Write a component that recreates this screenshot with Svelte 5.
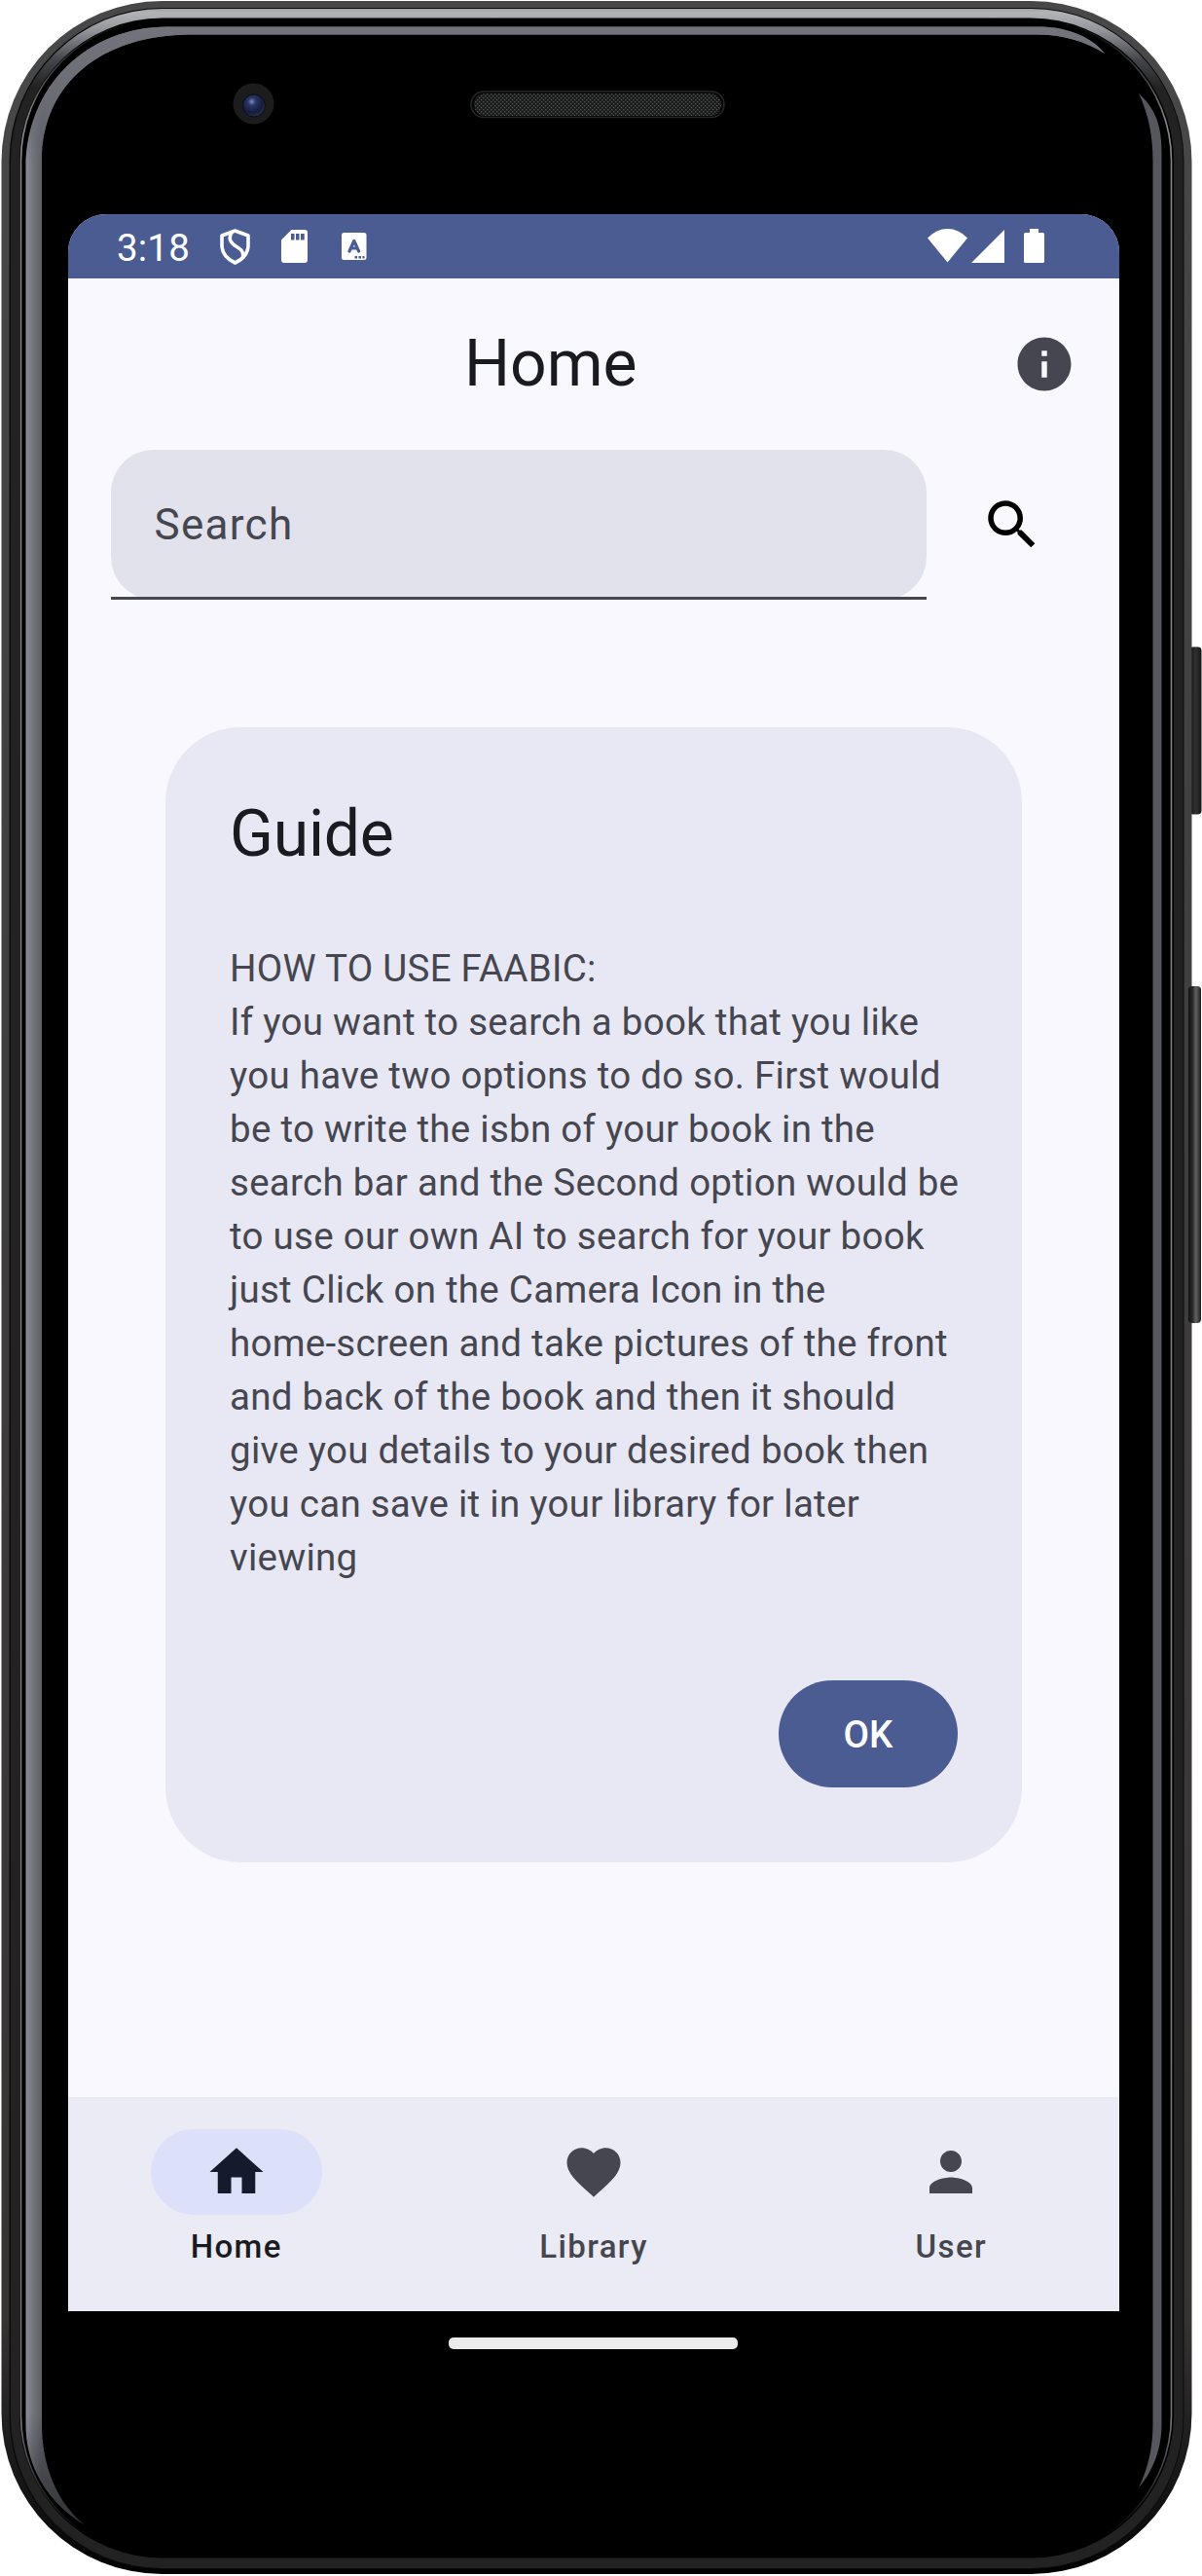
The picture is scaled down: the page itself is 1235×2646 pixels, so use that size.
<script>
  const tabs = [
    { label: 'Home', icon: 'M10 20v-6h4v6h5v-8h3L12 3 2 12h3v8z', active: true },
    {
      label: 'Library',
      icon: 'M12 21.35l-1.45-1.32C5.4 15.36 2 12.28 2 8.5 2 5.42 4.42 3 7.5 3c1.74 0 3.41.81 4.5 2.09C13.09 3.81 14.76 3 16.5 3 19.58 3 22 5.42 22 8.5c0 3.78-3.4 6.86-8.55 11.54z',
      active: false
    },
    {
      label: 'User',
      icon: 'M12 12c2.21 0 4-1.79 4-4s-1.79-4-4-4-4 1.79-4 4 1.79 4 4 4zm0 2c-2.67 0-8 1.34-8 4v2h16v-2c0-2.66-5.33-4-8-4z',
      active: false
    }
  ];

  const guide = [
    'HOW TO USE FAABIC:',
    'If you want to search a book that you like',
    'you have two options to do so. First would',
    'be to write the isbn of your book in the',
    'search bar and the Second option would be',
    'to use our own AI to search for your book',
    'just Click on the Camera Icon in the',
    'home-screen and take pictures of the front',
    'and back of the book and then it should',
    'give you details to your desired book then',
    'you can save it in your library for later',
    'viewing'
  ];
</script>

<div class="phone">
  <svg class="body" width="1235" height="2646" viewBox="0 0 1235 2646" aria-hidden="true">
    <defs>
      <linearGradient id="shell" gradientUnits="userSpaceOnUse" x1="0" y1="0" x2="0" y2="2646">
        <stop offset="0" stop-color="#484848" />
        <stop offset="0.9" stop-color="#363333" />
        <stop offset="0.975" stop-color="#111" />
        <stop offset="1" stop-color="#000" />
      </linearGradient>
      <linearGradient id="band" gradientUnits="userSpaceOnUse" x1="0" y1="8" x2="0" y2="90">
        <stop offset="0" stop-color="#9b9c9f" />
        <stop offset="0.06" stop-color="#b3b4b7" />
        <stop offset="0.3" stop-color="#909297" />
        <stop offset="0.65" stop-color="#44464b" />
        <stop offset="1" stop-color="#222" />
      </linearGradient>
      <linearGradient id="hair" gradientUnits="userSpaceOnUse" x1="0" y1="20" x2="0" y2="2646">
        <stop offset="0" stop-color="#777" stop-opacity="0" />
        <stop offset="0.04" stop-color="#888" />
        <stop offset="0.94" stop-color="#777" />
        <stop offset="0.985" stop-color="#555" stop-opacity="0" />
      </linearGradient>
      <linearGradient id="edgeL" gradientUnits="userSpaceOnUse" x1="26" y1="0" x2="43" y2="0">
        <stop offset="0" stop-color="#8d9096" />
        <stop offset="0.4" stop-color="#74777e" />
        <stop offset="1" stop-color="#5c5f66" />
      </linearGradient>
      <linearGradient id="edgeT" gradientUnits="userSpaceOnUse" x1="0" y1="27" x2="0" y2="170">
        <stop offset="0" stop-color="#73747b" />
        <stop offset="0.5" stop-color="#6b6d74" />
        <stop offset="1" stop-color="#6b6d74" stop-opacity="0" />
      </linearGradient>
      <linearGradient id="tipL" gradientUnits="userSpaceOnUse" x1="0" y1="2480" x2="0" y2="2600">
        <stop offset="0" stop-color="#000" stop-opacity="0" />
        <stop offset="1" stop-color="#000" stop-opacity="0.5" />
      </linearGradient>
      <linearGradient id="keyA" x1="0" y1="0" x2="1" y2="0">
        <stop offset="0" stop-color="#0a0a0a" />
        <stop offset="0.5" stop-color="#303030" />
        <stop offset="1" stop-color="#181818" />
      </linearGradient>
      <linearGradient id="keyB" x1="0" y1="0" x2="1" y2="0">
        <stop offset="0" stop-color="#111" />
        <stop offset="0.35" stop-color="#2c2c2c" />
        <stop offset="0.6" stop-color="#626262" />
        <stop offset="1" stop-color="#1c1c1c" />
      </linearGradient>
      <radialGradient id="lens" cx="0.4" cy="0.32" r="0.7">
        <stop offset="0" stop-color="#7c8bb8" />
        <stop offset="0.25" stop-color="#2a3768" />
        <stop offset="0.7" stop-color="#141b3c" />
        <stop offset="1" stop-color="#2b3448" />
      </radialGradient>
      <pattern id="mesh" width="4" height="4" patternUnits="userSpaceOnUse">
        <rect width="4" height="4" fill="#1a1c1c" />
        <rect x="0" y="0" width="1.3" height="1.3" fill="#545757" />
        <rect x="2" y="2" width="1.3" height="1.3" fill="#545757" />
      </pattern>
    </defs>

    <rect x="1222" y="664.5" width="12.5" height="172" rx="4" fill="url(#keyA)" />
    <rect x="1.5" y="1" width="1223" height="2643" rx="165" fill="url(#shell)" />
    <rect x="1221" y="1013" width="13" height="346" rx="4" fill="url(#keyB)" />
    <rect x="9.5" y="8" width="1207" height="2631" rx="157" fill="#0b0b0b" />
    <rect x="11" y="9" width="1204.5" height="2629" rx="156" fill="url(#band)" />
    <rect x="20" y="18.5" width="1186" height="2609" rx="147" fill="#000" />
    <rect x="21.5" y="20" width="1182" height="2606" rx="145" fill="none" stroke="url(#hair)" stroke-width="1.6" />

    <path
      fill="url(#edgeL)"
      d="M26.500 2490V172C27 88 90 27.500 172 27.500H1070C1098 28 1123 39 1135 55C1117 43 1092 35.500 1065 35.500H195C105 36 43 85 43 165V2490C43 2535 60 2572 86 2593C50 2571 26.500 2535 26.500 2490Z"
    />
    <path
      fill="url(#edgeT)"
      d="M26.500 172C27 88 90 27.500 172 27.500H1070C1098 28 1123 39 1135 55C1117 43 1092 35.500 1065 35.500H195C105 36 43 85 43 165V172Z"
    />
    <path
      fill="url(#tipL)"
      d="M26.500 2480V2490C26.500 2535 50 2571 86 2593C60 2572 43 2535 43 2490V2480Z"
    />
    <path
      fill="#55575d"
      d="M1170 96C1184 109 1193.500 124 1193.500 155V2490C1193.500 2515 1185 2538 1170 2555C1179 2537 1184.500 2515 1184.500 2490V165C1184.500 140 1180 117 1170 96Z"
    />

    <circle cx="260.500" cy="106.500" r="21" fill="#1c1c1d" />
    <circle cx="261" cy="108.500" r="11.500" fill="url(#lens)" stroke="#0b0d14" stroke-width="1" />
    <rect x="484" y="94" width="260" height="26.500" rx="13" fill="#050506" stroke="#25262a" stroke-width="1.500" />
    <rect x="487" y="96" width="254" height="23" rx="11.500" fill="url(#mesh)" />
  </svg>

  <div class="screen">
    <header class="status">
      <span class="time">3:18</span>
      <svg class="shield" width="32" height="38" viewBox="0 0 32 38">
        <path d="M15.500 2L29 7V17C29 25.500 23 31.500 15.500 35C8 31.500 2 25.500 2 17V7Z" fill="none" stroke="#fff" stroke-width="3.600" stroke-linejoin="round" />
        <path d="M12.500 3C7.500 10.500 11.500 15 16.500 18C21.500 21 24.500 23.500 23.500 28.500" fill="none" stroke="#fff" stroke-width="3.600" />
      </svg>
      <svg class="sd" width="27" height="34" viewBox="0 0 27 34">
        <path fill="#fff" fill-rule="evenodd" d="M10.500 0H24Q27 0 27 3V31Q27 34 24 34H3Q0 34 0 31V10.500ZM10 4V10.500H13.500V4ZM15 4V10.500H18.500V4ZM20 4V10.500H23.700V4Z" />
      </svg>
      <svg class="letter" width="26" height="28" viewBox="0 0 26 28">
        <rect width="25.500" height="28" rx="2.500" fill="#fff" />
        <path d="M8 19L12.800 8.500L17.600 19M9.500 16H16" fill="none" stroke="#4a5c92" stroke-width="3.200" stroke-linejoin="round" stroke-linecap="round" />
        <path d="M13.500 24h2.500v2.500h-2.500zM17.500 24h2.500v2.500h-2.500zM21.500 24h2v2.500h-2z" fill="#4a5c92" />
      </svg>
      <span class="fill"></span>
      <svg class="wifi" width="41" height="35" viewBox="0 0 41 35">
        <path fill="#fff" d="M0 9.500Q9 0 20.500 0T41 9.500L20.500 34.500Z" />
      </svg>
      <svg class="signal" width="34" height="35" viewBox="0 0 34 35">
        <path fill="#fff" d="M0 35L34 1V35Z" />
      </svg>
      <svg class="battery" width="21" height="35" viewBox="0 0 21 35">
        <path fill="#fff" d="M6 0H15V4H19.500Q21 4 21 5.500V33.500Q21 35 19.500 35H1.500Q0 35 0 33.500V5.500Q0 4 1.500 4H6Z" />
      </svg>
    </header>

    <div class="appbar">
      <h1>Home</h1>
      <svg width="66" height="66" viewBox="0 0 24 24" fill="#45464f">
        <path d="M12 2C6.480 2 2 6.480 2 12s4.480 10 10 10 10-4.480 10-10S17.520 2 12 2zm1 15h-2v-6h2v6zm0-8h-2V7h2v2z" />
      </svg>
    </div>

    <div class="search">
      <div class="field"><span>Search</span></div>
      <svg width="66" height="66" viewBox="0 0 24 24" fill="#000">
        <path d="M15.500 14h-.79l-.28-.27C15.410 12.590 16 11.110 16 9.500 16 5.910 13.090 3 9.500 3S3 5.910 3 9.500 5.910 16 9.500 16c1.610 0 3.090-.59 4.230-1.570l.27.28v.79l5 4.990L20.490 19l-4.990-5zm-6 0C7.010 14 5 11.990 5 9.500S7.010 5 9.500 5 14 7.010 14 9.500 11.990 14 9.500 14z" />
      </svg>
    </div>

    <main>
      <section class="card">
        <h2>Guide</h2>
        <p>
          {#each guide as line}
            <span>{line}</span>
          {/each}
        </p>
        <button type="button">OK</button>
      </section>
    </main>

    <nav>
      {#each tabs as tab}
        <div class="tab" class:active={tab.active}>
          <div class="pill">
            <svg width="66" height="66" viewBox="0 0 24 24"><path d={tab.icon} fill="currentColor" /></svg>
          </div>
          <span>{tab.label}</span>
        </div>
      {/each}
    </nav>
  </div>
  <div class="gesture"></div>
</div>

<style>
  :global(body) {
    margin: 0;
    background: #fff;
  }
  .phone {
    position: relative;
    box-sizing: border-box;
    width: 1235px;
    height: 2646px;
    padding: 220px 85px 0 70px;
    font-family: Roboto, 'Liberation Sans', sans-serif;
    overflow: hidden;
  }
  .body {
    position: absolute;
    inset: 0;
  }
  svg {
    display: block;
    flex: none;
  }
  .screen {
    position: relative;
    display: flex;
    flex-direction: column;
    width: 1080px;
    height: 2154px;
    background: #f9f8ff;
    border-radius: 39px 39px 0 0;
    overflow: hidden;
  }
  .status {
    display: flex;
    align-items: flex-start;
    box-sizing: border-box;
    height: 66px;
    padding: 15px 77px 0 50px;
    background: #4a5c92;
    color: #fff;
  }
  .time {
    width: 106px;
    font-size: 38.5px;
    line-height: 40px;
    letter-spacing: 0.2px;
  }
  .sd {
    margin: 1px 0 0 31px;
  }
  .letter {
    margin: 4px 0 0 35px;
  }
  .fill {
    flex: 1;
  }
  .signal {
    margin-left: 4px;
  }
  .battery {
    margin-left: 20px;
  }
  .appbar {
    display: flex;
    align-items: center;
    justify-content: space-between;
    box-sizing: border-box;
    height: 176px;
    padding: 0 44px 0 407px;
  }
  h1,
  h2 {
    margin: 0;
    font-size: 66px;
    font-weight: 400;
    line-height: 88px;
    color: #1a1b21;
  }
  h2 {
    letter-spacing: -0.2px;
  }
  .search {
    display: flex;
    align-items: center;
    gap: 55px;
    padding-left: 44px;
  }
  .field {
    position: relative;
    display: flex;
    align-items: center;
    box-sizing: border-box;
    width: 838px;
    height: 154px;
    padding-left: 44.5px;
    border-radius: 44px;
    background: #e2e2ec;
    font-size: 44px;
    letter-spacing: 1.3px;
    color: #45464f;
  }
  .field::after {
    content: '';
    position: absolute;
    left: 0;
    right: 0;
    bottom: 0;
    height: 2.75px;
    background: #45464f;
  }
  main {
    flex: 1;
    display: flex;
    justify-content: center;
    align-items: flex-start;
    padding-top: 131px;
  }
  .card {
    display: flex;
    flex-direction: column;
    box-sizing: border-box;
    width: 880px;
    height: 1166px;
    padding: 66px 66px 77px;
    border-radius: 77px;
    background: #e8e8f4;
  }
  p {
    display: flex;
    flex-direction: column;
    margin: 66px 0 0;
    font-size: 38.5px;
    line-height: 55px;
    letter-spacing: 0.27px;
    color: #45464f;
    white-space: nowrap;
  }
  button {
    align-self: flex-end;
    width: 184px;
    height: 110px;
    margin: auto 0 0;
    padding: 0;
    border: 0;
    border-radius: 55px;
    background: #4a5c92;
    color: #fff;
    font: 500 38.5px/55px Roboto, 'Liberation Sans', sans-serif;
    letter-spacing: 0;
  }
  nav {
    display: flex;
    gap: 22px;
    height: 220px;
    background: #ebebf5;
  }
  .tab {
    flex: 1;
    display: flex;
    flex-direction: column;
    align-items: center;
    padding-top: 33px;
    color: #45464f;
    font-size: 33px;
    font-weight: 500;
    line-height: 44px;
    letter-spacing: 1.375px;
  }
  .tab span {
    margin-top: 11px;
  }
  .pill {
    display: flex;
    align-items: center;
    justify-content: center;
    width: 176px;
    height: 88px;
    border-radius: 44px;
  }
  .active {
    color: #1a1b21;
  }
  .active .pill {
    background: #dce1f9;
    color: #151b2c;
  }
  .gesture {
    position: relative;
    width: 297px;
    height: 12px;
    margin: 27px 0 0 391px;
    border-radius: 5px;
    background: #ebebeb;
  }
</style>
